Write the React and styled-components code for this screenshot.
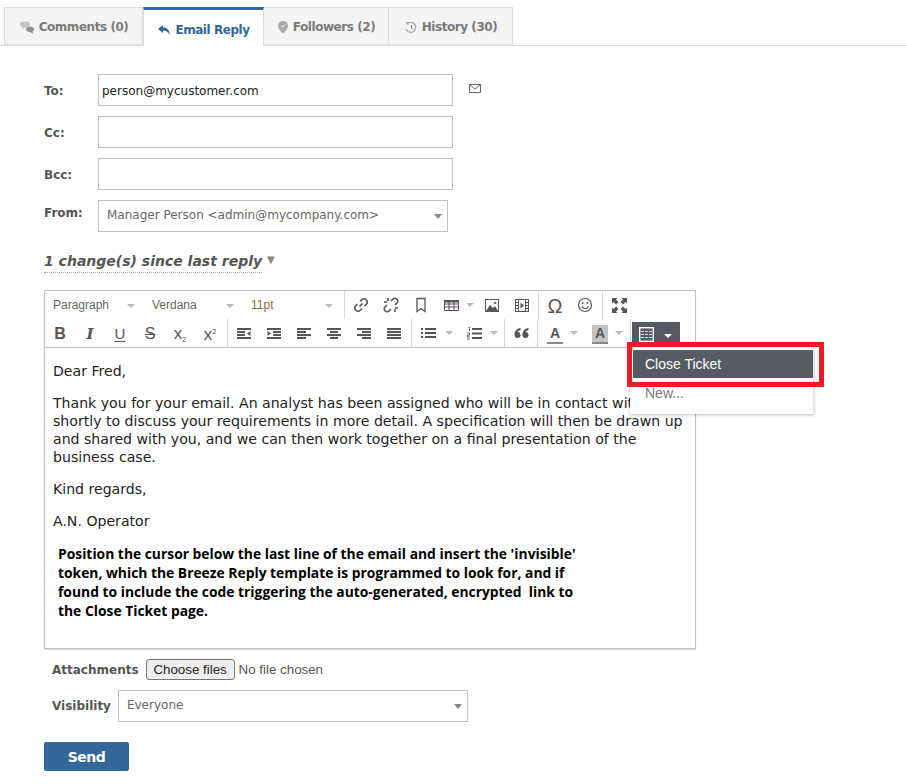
import React from 'react';
import styled, { createGlobalStyle } from 'styled-components';

const Global = createGlobalStyle`
  html, body { margin: 0; padding: 0; background: #fff; }
  body { font-family: "DejaVu Sans", Verdana, sans-serif; color: #444; }
  * { box-sizing: border-box; }
`;
const Page = styled.div`width: 906px; height: 784px; padding-top: 7px; overflow: hidden;`;
const Tabs = styled.div`display: flex; height: 39px; padding-left: 4px; border-bottom: 1px solid #ddd;`;
const Tab = styled.div`
  display: flex; align-items: center; justify-content: center; gap: 4px;
  width: ${p => p.$w}px; font-size: 12px; letter-spacing: -0.45px; font-weight: bold;
  background: ${p => p.$active ? '#fff' : '#f4f4f4'};
  color: ${p => p.$active ? '#336699' : '#7a7a7a'};
  border: 1px solid #ddd; border-left-width: ${p => p.$first || p.$active ? 1 : 0}px;
  border-top: ${p => p.$active ? '3px solid #336699' : '1px solid #ddd'};
  border-bottom: ${p => p.$active ? '0' : '1px solid #ddd'};
  height: ${p => p.$active ? 39 : 38}px;
  padding-top: ${p => p.$active ? 3 : 2}px;
`;
const Form = styled.div`padding: 28px 0 0 44px;`;
const Row = styled.div`display: flex; align-items: center; height: 32px; margin-bottom: 10px;`;
const Label = styled.label`width: 54px; font-size: 12px; font-weight: bold; color: #555; padding-top: ${p => p.$up ? 0 : 1}px; margin-top: ${p => p.$up ? -6 : 0}px;`;
const TextInput = styled.input`
  width: 355px; height: 32px; border: 1px solid #c0c0c0; padding: 2px 3px 0; outline: none;
  font: 12px "DejaVu Sans", Verdana, sans-serif; color: #222; background: #fff;
`;
const MailIcon = styled.svg`margin-left: 16px; margin-top: -3px;`;
const SelectBox = styled.div`
  position: relative; width: ${p => p.$w}px; height: 32px; border: 1px solid #c0c0c0;
  display: flex; align-items: center; padding: 0 0 2px 8px; font-size: 12px; color: #666; background: #fff;
  &::after { content: ""; position: absolute; right: 5px; top: 13px; border: 4.5px solid transparent; border-top: 5px solid #888; border-bottom: 0; }
`;
const Changes = styled.div`display: flex; align-items: flex-start; margin-top: 19px; height: 39px;`;
const ChangeText = styled.span`
  font-size: 14px; font-weight: bold; font-style: italic; color: #555; height: 22px; line-height: 20px;
  border-bottom: 1px dotted #aaa;
`;
const ChangeCaret = styled.span`font-size: 10px; color: #888; margin: 3px 0 0 5px;`;
const Editor = styled.div`position: relative; width: 652px; height: 359px; border: 1px solid #c0c0c0; box-shadow: 0 1px 1px rgba(0,0,0,.12);`;
const Toolbar = styled.div`height: 57px; border-bottom: 1px solid #c0c0c0;`;
const ToolRow = styled.div`display: flex; height: 28px;`;
const Group = styled.div`
  display: flex; height: 100%; padding-right: ${p => p.$pr ?? 2}px; margin-right: 1px;
  border-right: ${p => p.$plain ? '0' : '1px solid #d8d8d8'};
`;
const ToolSelect = styled.div`
  position: relative; width: ${p => p.$w}px; display: flex; align-items: center; padding-left: 8px;
  font: 12px "Liberation Sans", Arial, sans-serif; color: ${p => p.$c || '#666'};
  &::after { content: ""; position: absolute; right: 9px; top: 13px; border: 4px solid transparent; border-top: 4px solid #bbb; border-bottom: 0; }
`;
const ToolBtn = styled.div`
  position: relative; width: ${p => p.$w || 30}px; height: 28px; display: flex; align-items: center;
  justify-content: ${p => p.$w ? 'flex-start' : 'center'}; padding-left: ${p => p.$w ? 8 : 0}px;
  color: #555; font-family: "Liberation Sans", Arial, sans-serif;
`;
const Caret = styled.span`
  position: absolute; right: ${p => p.$r ?? 6}px; top: 12px; border: 4px solid transparent; border-top: 4px solid #bbb; border-bottom: 0;
`;
const Glyph = styled.span`
  font-family: ${p => p.$serif ? '"DejaVu Serif", serif' : '"Liberation Sans", Arial, sans-serif'};
  font-size: ${p => p.$s || 15}px; font-weight: ${p => p.$b ? 'bold' : 'normal'}; font-style: ${p => p.$i ? 'italic' : 'normal'};
  text-decoration: ${p => p.$d || 'none'}; text-underline-offset: 2px; line-height: 1; color: #555;
  padding-top: ${p => p.$pt ?? 2}px;
`;
const Sub = styled.sub`font-size: 7px; vertical-align: -3px;`;
const Sup = styled.sup`font-size: 7px; vertical-align: 6px;`;
const ColorA = styled.span`
  display: flex; flex-direction: column; align-items: center; width: 16px; height: 19px;
  font-size: 14px; font-weight: bold; line-height: 15px; color: #555; padding-top: 1px; margin-top: 2px;
  background: ${p => p.$bg || 'transparent'}; border-bottom: 2px solid #888;
`;
const DarkBtn = styled.div`
  position: absolute; left: 587px; top: 31px; width: 48px; height: 25px; background: #555a63;
  display: flex; align-items: center; padding-left: 7px; gap: 10px;
`;
const WhiteCaret = styled.span`border: 4px solid transparent; border-top: 4px solid #fff; border-bottom: 0; margin-top: 2px;`;
const Content = styled.div`
  height: 300px; padding: 14px 8px 0; font-size: 14.1px; line-height: 18px; color: #222;
  p { margin: 0 0 14px; white-space: nowrap; }
`;
const Note = styled.div`
  margin: 3px 0 0 5px; font: bold 13.85px/19px "Open Sans", sans-serif; color: #000; white-space: pre;
`;
const Menu = styled.div`
  position: absolute; left: 585px; top: 55px; width: 184px; height: 68px; background: #fff;
  border-right: 1px solid #e4e4e4; box-shadow: 0 1px 3px rgba(0,0,0,.25); padding: 4px 0 0 3px;
`;
const MenuActive = styled.div`
  height: 28px; width: 180px; background: #555a63; color: #fff; padding-left: 12px; display: flex; align-items: center;
  font: 14px "Liberation Sans", Arial, sans-serif;
`;
const MenuItem = styled.div`padding: 7px 0 0 12px; font: 14px "Liberation Sans", Arial, sans-serif; color: #777;`;
const Highlight = styled.div`
  position: absolute; left: 582px; top: 51px; width: 197px; height: 45px; border: 5px solid #ed1c24; pointer-events: none;
`;
const AttachRow = styled.div`display: flex; align-items: center; height: 21px; margin: 10px 0 10px 8px;`;
const SmallLabel = styled.span`font-size: 12px; font-weight: bold; color: #555; margin-right: ${p => p.$m}px;`;
const FileBtn = styled.button`
  width: 89px; height: 21px; padding: 0; border: 1px solid #767676; border-radius: 3px; background: #efefef;
  font: 13.33px "Liberation Sans", Arial, sans-serif; color: #222; margin-right: 4px;
`;
const FileText = styled.span`font: 13.33px "Liberation Sans", Arial, sans-serif; color: #555;`;
const VisRow = styled.div`display: flex; align-items: center; height: 32px; margin-left: 8px;`;
const Send = styled.button`
  display: block; width: 85px; height: 29px; margin-top: 20px; border: 0; border-radius: 2px; background: #336699; color: #fff;
  font: bold 14px "DejaVu Sans", Verdana, sans-serif; letter-spacing: -0.5px;
`;

const S = ({ w = 16, h = 16, children, ...r }) => <svg width={w} height={h} viewBox={`0 0 ${w} ${h}`} {...r}>{children}</svg>;

const Icons = {
  link: <S><path d="M6.5 9.5l3-3M7 4.5l2-2a2.6 2.6 0 0 1 3.7 0l.8.8a2.6 2.6 0 0 1 0 3.7l-2 2M9 11.5l-2 2a2.6 2.6 0 0 1-3.7 0l-.8-.8a2.6 2.6 0 0 1 0-3.7l2-2" fill="none" stroke="#555" strokeWidth="1.7" /></S>,
  unlink: <S><path d="M8 4l2-2a2.6 2.6 0 0 1 3.7 0l.3.3a2.6 2.6 0 0 1 0 3.7l-2 2M8 12l-2 2a2.6 2.6 0 0 1-3.7 0L2 13.7a2.6 2.6 0 0 1 0-3.7l2-2M1 5h3M5 1v3M12 15v-3M15 11h-3" fill="none" stroke="#555" strokeWidth="1.6" /></S>,
  bookmark: <S w={12} h={16}><path d="M2 1.5h8v13l-4-3-4 3z" fill="none" stroke="#555" strokeWidth="1.3" /></S>,
  table: <S w={15} h={12}><path d="M.5 1.5h14v10H.5zM.5 5h14M.5 8h14M5 1.5v10M10 1.5v10" fill="none" stroke="#5d4a5d" strokeWidth="1" /><rect x="0" y="1" width="15" height="2.5" fill="#555" /></S>,
  image: <S w={14} h={13}><rect x=".5" y=".5" width="13" height="12" fill="none" stroke="#555" /><path d="M1 12l4-6 3 3 2-2 3 5z" fill="#555" /><circle cx="10" cy="4" r="1.3" fill="#777" /></S>,
  media: <S w={14} h={13}><rect x=".5" y=".5" width="13" height="12" fill="none" stroke="#555" /><path d="M3.5 1v11M10.5 1v11" stroke="#555" strokeWidth="1" /><path d="M0 3.5h3M0 6.5h3M0 9.5h3M11 3.5h3M11 6.5h3M11 9.5h3" stroke="#555" strokeWidth="1" /><path d="M5.5 3.5l3.5 3-3.5 3z" fill="#555" /></S>,
  smile: <S><circle cx="8" cy="8" r="6.5" fill="none" stroke="#555" strokeWidth="1.2" /><circle cx="5.6" cy="6" r="1" fill="#555" /><circle cx="10.4" cy="6" r="1" fill="#555" /><path d="M4.5 9.5a4 4 0 0 0 7 0" fill="none" stroke="#555" strokeWidth="1.2" /></S>,
  full: <S w={15} h={15}><path d="M0 0h5.5L4 1.500 6.500 4 4 6.500 1.500 4 0 5.500zM15 0v5.500L13.500 4 11 6.500 8.500 4 11 1.500 9.500 0zM0 15V9.500L1.500 11 4 8.500 6.500 11 4 13.500 5.500 15zM15 15H9.500L11 13.500 8.500 11 11 8.500 13.500 11 15 9.500z" fill="#555" /></S>,
  ul: <S w={15} h={12}><path d="M0 1h2v2H0zM0 5h2v2H0zM0 9h2v2H0z" fill="#555" /><path d="M4 1h11v2H4zM4 5h11v2H4zM4 9h11v2H4z" fill="#555" /></S>,
  ol: <S w={15} h={13}><path d="M1 0h1.5v4M0 6h2.500v2H.5v2H3M0 12h3" fill="none" stroke="#6a4b4b" strokeWidth=".9" /><path d="M5 1h10v2H5zM5 5.500h10v2H5zM5 10h10v2H5z" fill="#555" /></S>,
  quote: <S w={15} h={11}><path d="M6.500 0C2.500.5.500 3 .5 7a3 3 0 1 0 3-3c.3-.7 1.300-1.500 3-2zM14.500 0c-4 .5-6 3-6 7a3 3 0 1 0 3-3c.3-.7 1.300-1.500 3-2z" fill="#555" /></S>,
  token: <S w={15} h={15}><rect x=".7" y=".7" width="13.6" height="13.6" fill="none" stroke="#fff" strokeWidth="1.4" /><path d="M2 4.500h11M2 7.500h11M2 10.500h11" stroke="#f0c8f0" strokeWidth="1.2" strokeDasharray="3 1" /></S>,
};
const align = (l) => <S w={14} h={11}>{l.map(([x, wd], i) => <rect key={i} x={x} y={i * 3} width={wd} height={2} fill="#555" />)}</S>;
const indent = (out) => <S w={14} h={11}><rect y="0" width="14" height="2" fill="#555" /><rect x={out ? 0 : 6} y="3" width="8" height="2" fill="#555" /><rect x={out ? 0 : 6} y="6" width="8" height="2" fill="#555" /><rect y="9" width="14" height="2" fill="#555" /><path d={out ? 'M13.5 3v5L10 5.5z' : 'M.5 3v5L4 5.5z'} fill="#555" /></S>;

export default function App() {
  return (
    <Page>
      <Global />
      <Tabs>
        <Tab $w={139} $first>
          <S w={16} h={13}><path d="M1 2.500C1 1 3 .5 6 .5s5 .5 5 2.500-2 3.500-5 3.500l-3 2 .5-2.500C2 5.500 1 4.500 1 2.500z" fill="#c4c4c4" /><path d="M7 8c0-1.500 2-2.500 4-2.500s4 1 4 2.500c0 1.200-.5 2-1.500 2.500l.5 2-3-1.500C8.500 11 7 10 7 8z" fill="#8f8f8f" /></S>
          Comments (0)
        </Tab>
        <Tab $w={121} $active>
          <S w={14} h={12}><path d="M6 1L1 5l5 4V6.500c3 0 5 1 6.500 4.500C13 6 10 3.500 6 3.500z" fill="#336699" /></S>
          Email Reply
        </Tab>
        <Tab $w={125}>
          <S w={12} h={14}><path d="M6 1a5 5 0 0 0-5 5c0 3 5 7.500 5 7.500S11 9 11 6a5 5 0 0 0-5-5z" fill="#a8a8a8" /><path d="M4 5.500l1.500 1.500L8 4.500" fill="none" stroke="#fff" strokeWidth="1" /></S>
          Followers (2)
        </Tab>
        <Tab $w={124}>
          <S w={14} h={13}><path d="M3 3a5 5 0 1 1-1 5" fill="none" stroke="#aaa" strokeWidth="1.3" /><path d="M1 1h3.500v3.500z" fill="#aaa" /><path d="M7.500 4v3l1.500 1.500" fill="none" stroke="#777" strokeWidth="1" /></S>
          History (30)
        </Tab>
      </Tabs>
      <Form>
        <Row>
          <Label>To:</Label>
          <TextInput defaultValue="person@mycustomer.com" />
          <MailIcon width="12" height="9" viewBox="0 0 12 9"><path d="M.5.500h11v8H.5zM.5.500L6 5l5.500-4.500" fill="none" stroke="#667" strokeWidth="1" /></MailIcon>
        </Row>
        <Row><Label>Cc:</Label><TextInput /></Row>
        <Row><Label>Bcc:</Label><TextInput /></Row>
        <Row><Label $up>From:</Label><SelectBox $w={350}>Manager Person &lt;admin@mycompany.com&gt;</SelectBox></Row>
        <Changes><ChangeText>1 change(s) since last reply</ChangeText><ChangeCaret>▼</ChangeCaret></Changes>
        <Editor>
          <Toolbar>
            <ToolRow>
              <Group>
                <ToolSelect $w={99}>Paragraph</ToolSelect>
                <ToolSelect $w={99}>Verdana</ToolSelect>
                <ToolSelect $w={99} $c="#8a6a3a">11pt</ToolSelect>
              </Group>
              <Group $pr={1}>
                <ToolBtn>{Icons.link}</ToolBtn>
                <ToolBtn>{Icons.unlink}</ToolBtn>
                <ToolBtn>{Icons.bookmark}</ToolBtn>
                <ToolBtn $w={41}>{Icons.table}<Caret $r={3} /></ToolBtn>
                <ToolBtn>{Icons.image}</ToolBtn>
                <ToolBtn>{Icons.media}</ToolBtn>
              </Group>
              <Group>
                <ToolBtn><Glyph $s={20}>Ω</Glyph></ToolBtn>
                <ToolBtn>{Icons.smile}</ToolBtn>
              </Group>
              <Group $plain><ToolBtn>{Icons.full}</ToolBtn></Group>
            </ToolRow>
            <ToolRow>
              <Group>
                <ToolBtn><Glyph $b $s={16}>B</Glyph></ToolBtn>
                <ToolBtn><Glyph $b $i $serif $s={15}>I</Glyph></ToolBtn>
                <ToolBtn><Glyph $d="underline" $s={15} $pt={0}>U</Glyph></ToolBtn>
                <ToolBtn><Glyph $d="line-through" $s={16}>S</Glyph></ToolBtn>
                <ToolBtn><Glyph $s={17}>x<Sub>2</Sub></Glyph></ToolBtn>
                <ToolBtn><Glyph $s={17}>x<Sup>2</Sup></Glyph></ToolBtn>
              </Group>
              <Group>
                <ToolBtn>{indent(true)}</ToolBtn>
                <ToolBtn>{indent(false)}</ToolBtn>
                <ToolBtn>{align([[0, 14], [0, 9], [0, 14], [0, 9]])}</ToolBtn>
                <ToolBtn>{align([[0, 14], [3, 8], [0, 14], [3, 8]])}</ToolBtn>
                <ToolBtn>{align([[0, 14], [5, 9], [0, 14], [5, 9]])}</ToolBtn>
                <ToolBtn>{align([[0, 14], [0, 14], [0, 14], [0, 14]])}</ToolBtn>
              </Group>
              <Group $pr={0}>
                <ToolBtn $w={46}>{Icons.ul}<Caret /></ToolBtn>
                <ToolBtn $w={45}>{Icons.ol}<Caret /></ToolBtn>
              </Group>
              <Group $pr={1}>
                <ToolBtn>{Icons.quote}</ToolBtn>
              </Group>
              <Group $pr={1}>
                <ToolBtn $w={45}><ColorA>A</ColorA><Caret /></ToolBtn>
                <ToolBtn $w={45}><ColorA $bg="#c4c4c4">A</ColorA><Caret /></ToolBtn>
              </Group>
            </ToolRow>
          </Toolbar>
          <DarkBtn>{Icons.token}<WhiteCaret /></DarkBtn>
          <Content>
            <p>Dear Fred,</p>
            <p>Thank you for your email. An analyst has been assigned who will be in contact with you<br />shortly to discuss your requirements in more detail. A specification will then be drawn up<br />and shared with you, and we can then work together on a final presentation of the<br />business case.</p>
            <p>Kind regards,</p>
            <p>A.N. Operator</p>
            <Note>{"Position the cursor below the last line of the email and insert the 'invisible'\ntoken, which the Breeze Reply template is programmed to look for, and if\nfound to include the code triggering the auto-generated, encrypted  link to\nthe Close Ticket page."}</Note>
          </Content>
          <Menu>
            <MenuActive>Close Ticket</MenuActive>
            <MenuItem>New...</MenuItem>
          </Menu>
          <Highlight />
        </Editor>
        <AttachRow>
          <SmallLabel $m={7}>Attachments</SmallLabel>
          <FileBtn>Choose files</FileBtn>
          <FileText>No file chosen</FileText>
        </AttachRow>
        <VisRow>
          <SmallLabel $m={7}>Visibility</SmallLabel>
          <SelectBox $w={350}>Everyone</SelectBox>
        </VisRow>
        <Send>Send</Send>
      </Form>
    </Page>
  );
}
